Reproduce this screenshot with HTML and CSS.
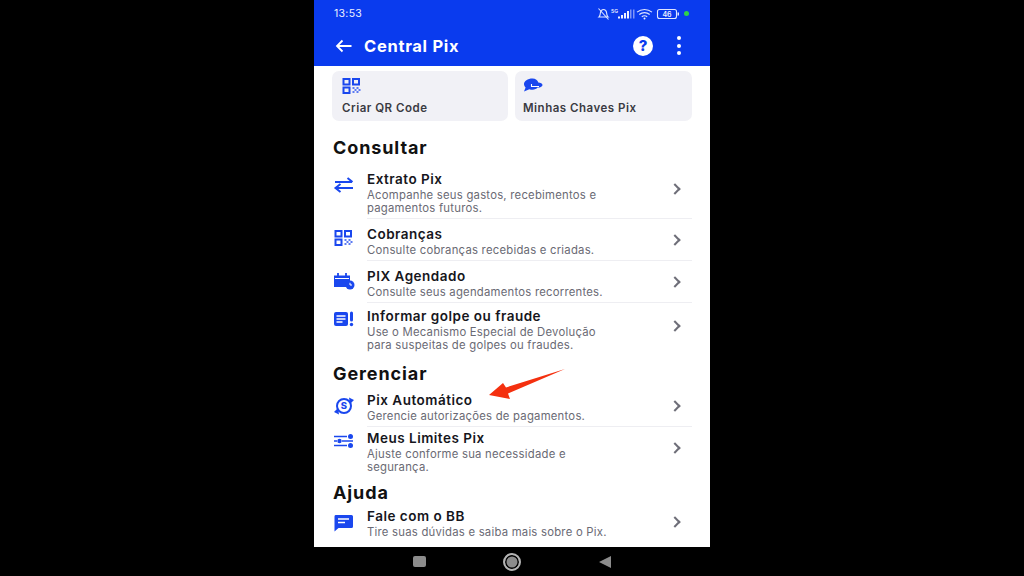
FILE: index.html
```html
<!DOCTYPE html>
<html lang="pt-BR">
<head>
    <meta charset="UTF-8">
    <title>Central Pix</title>
    <link rel="stylesheet" href="styles.css">
</head>
<body>
<div class="phone">
    <header class="top">
        <div class="status">
            <span class="clock">13:53</span>
            <svg class="status-icons" width="84" height="14" viewBox="0 0 84 14">
                <g fill="none" stroke="#dfe5ff" stroke-width="1.100">
                    <path d="M2 10c1.200-1 1.200-2.500 1.400-4.300C3.700 3.500 4.800 2.500 6.500 2.500s2.800 1 3.100 3.200c.2 1.800.2 3.300 1.400 4.300z"/>
                    <path d="M1.500 1.500l10 11"/>
                    <path d="M40 5.200c4.300-3.600 10.700-3.600 15 0M42.300 7.500c3-2.500 7.400-2.500 10.400 0M44.800 9.800c1.500-1.200 3.900-1.200 5.400 0"/>
                    <rect x="60.500" y="2.500" width="19" height="9" rx="2"/>
                </g>
                <text class="tiny" x="14" y="6">5G</text>
                <g fill="#f0f3ff">
                    <rect x="21" y="9.500" width="2" height="2"/>
                    <rect x="24" y="8" width="2" height="3.500"/>
                    <rect x="27" y="6" width="2" height="5.500"/>
                    <rect x="30" y="4" width="2" height="7.500"/>
                </g>
                <g fill="#7f94f5">
                    <rect x="33" y="2.500" width="1.500" height="9"/>
                    <rect x="36" y="2.500" width="1.500" height="9"/>
                </g>
                <circle cx="47.500" cy="11.500" r="1" fill="#f0f3ff"/>
                <rect x="80.500" y="5.500" width="1.500" height="3" fill="#dfe5ff"/>
                <text class="tiny-batt" x="70" y="10" text-anchor="middle">46</text>
            </svg>
            <span class="led"></span>
        </div>
        <div class="bar">
            <svg class="back" width="18" height="14" viewBox="0 0 18 14">
                <path d="M16.500 7H2M7.500 1.500L2 7l5.500 5.500" fill="none" stroke="#fff" stroke-width="1.800"/>
            </svg>
            <h1>Central Pix</h1>
            <span class="help">?</span>
            <span class="dots"><i></i><i></i><i></i></span>
        </div>
    </header>

    <main class="content">
        <div class="cards">
            <div class="card">
                <svg class="icon" width="20" height="16" viewBox="0 0 20 16">
                    <use href="#qr"/>
                </svg>
                <span>Criar QR Code</span>
            </div>
            <div class="card card-keys">
                <svg class="icon" width="20" height="16" viewBox="0 0 20 16">
                    <path d="M9.500 .5c3 0 5.300 1.800 5.800 4 2.200 0 4.200 1.100 4.200 2.500 0 1.500-2 2.600-4.300 2.600h-.6c-1 1.300-2.900 2.200-5.100 2.200-1.100 0-2.200-.2-3.100-.6L1 13.500l1.600-3.900C1.600 8.500 1 7.300 1 6 1 3 4.700 .5 9.500 .5z" fill="#1a47ee"/>
                    <path d="M8.500 6v2.500H16" fill="none" stroke="#fff" stroke-width="1.100"/>
                </svg>
                <span>Minhas Chaves Pix</span>
            </div>
        </div>

        <h2 class="first">Consultar</h2>
        <div class="row r55">
            <svg class="row-icon top-13" width="22" height="16" viewBox="0 0 22 16">
                <path d="M2 5h17M14.500 1l5 4M20 11H3M7.500 7l-5 4 5 4" fill="none" stroke="#1a47ee" stroke-width="2"/>
            </svg>
            <div class="row-main">
                <div class="text">
                    <b>Extrato Pix</b>
                    <p>Acompanhe seus gastos, recebimentos e<br>pagamentos futuros.</p>
                </div>
                <span class="chev"></span>
            </div>
        </div>
        <div class="row r42">
            <svg class="row-icon" width="22" height="16" viewBox="0 0 20 16">
                <use href="#qr"/>
            </svg>
            <div class="row-main">
                <div class="text">
                    <b>Cobranças</b>
                    <p>Consulte cobranças recebidas e criadas.</p>
                </div>
                <span class="chev"></span>
            </div>
        </div>
        <div class="row r42">
            <svg class="row-icon" width="22" height="18" viewBox="0 0 22 18">
                <path d="M1 3.500h16V9a5 5 0 0 0-3.500 6H1z" fill="#1a47ee"/>
                <path d="M5 1v4M13 1v4" stroke="#1a47ee" stroke-width="1.800"/>
                <path d="M2 6.500h14" stroke="#fff" stroke-width="1"/>
                <circle cx="17" cy="13" r="4.500" fill="#1a47ee"/>
                <path d="M17 10.800V13h2" fill="none" stroke="#fff" stroke-width="1"/>
            </svg>
            <div class="row-main">
                <div class="text">
                    <b>PIX Agendado</b>
                    <p>Consulte seus agendamentos recorrentes.</p>
                </div>
                <span class="chev"></span>
            </div>
        </div>
        <div class="row r52">
            <svg class="row-icon top-8" width="22" height="16" viewBox="0 0 22 16">
                <rect x="1" y="1" width="14" height="14" rx="2" fill="#1a47ee"/>
                <path d="M3.500 5h9M3.500 8h9M3.500 11h6" stroke="#fff" stroke-width="1.300"/>
                <path d="M18.500 2v7" stroke="#1a47ee" stroke-width="3" stroke-linecap="round"/>
                <circle cx="18.500" cy="13.500" r="1.700" fill="#1a47ee"/>
            </svg>
            <div class="row-main plain">
                <div class="text">
                    <b>Informar golpe ou fraude</b>
                    <p>Use o Mecanismo Especial de Devolução<br>para suspeitas de golpes ou fraudes.</p>
                </div>
                <span class="chev"></span>
            </div>
        </div>

        <h2 class="manage">Gerenciar</h2>
        <div class="row r39">
            <svg class="row-icon top-9" width="22" height="18" viewBox="0 0 22 18">
                <circle cx="11" cy="9" r="7" fill="none" stroke="#1a47ee" stroke-width="2"/>
                <path d="M16 .5l1 6.500 4-4zM6 17.500L5 11l-4 4z" fill="#1a47ee"/>
                <text class="coin" x="11" y="12.300" text-anchor="middle">S</text>
            </svg>
            <div class="row-main">
                <div class="text">
                    <b>Pix Automático</b>
                    <p>Gerencie autorizações de pagamentos.</p>
                </div>
                <span class="chev"></span>
            </div>
        </div>
        <div class="row r50">
            <svg class="row-icon top-7" width="22" height="14" viewBox="0 0 22 14">
                <path d="M1 2.500h13M1 7h3M9 7h11M1 11.500h13" stroke="#1a47ee" stroke-width="1.600"/>
                <circle cx="6.500" cy="7" r="2.200" fill="#1a47ee"/>
                <circle cx="17.500" cy="2.500" r="2.500" fill="#1a47ee"/>
                <circle cx="17.500" cy="11.500" r="2.500" fill="#1a47ee"/>
            </svg>
            <div class="row-main plain">
                <div class="text">
                    <b>Meus Limites Pix</b>
                    <p>Ajuste conforme sua necessidade e<br>segurança.</p>
                </div>
                <span class="chev"></span>
            </div>
        </div>

        <h2 class="support">Ajuda</h2>
        <div class="row r38">
            <svg class="row-icon top-10" width="22" height="18" viewBox="0 0 22 18">
                <path d="M2.500 1h16A1.500 1.500 0 0 1 20 2.500v10a1.500 1.500 0 0 1-1.500 1.500H5.500l-4 3.500v-15A1.500 1.500 0 0 1 2.500 1z" fill="#1a47ee"/>
                <path d="M5 5h11M5 8.500h7" stroke="#fff" stroke-width="1.300"/>
            </svg>
            <div class="row-main plain">
                <div class="text">
                    <b>Fale com o BB</b>
                    <p>Tire suas dúvidas e saiba mais sobre o Pix.</p>
                </div>
                <span class="chev"></span>
            </div>
        </div>
    </main>

    <nav class="softkeys">
        <span class="key-square"></span>
        <span class="key-circle"></span>
        <span class="key-back"></span>
    </nav>

    <!-- seta vermelha por cima da tela -->
    <svg class="arrow" width="78" height="32" viewBox="0 0 78 32">
        <path d="M76 0L17 18.500 14 14 0 26l21 4-2-5.500z" fill="#f4300f"/>
    </svg>
</div>

<svg class="defs" width="0" height="0">
    <defs>
        <g id="qr">
            <g fill="none" stroke="#1a47ee" stroke-width="2">
                <rect x="1.500" y="1" width="6" height="5.500"/>
                <rect x="11" y="1" width="6" height="5.500"/>
                <rect x="1.500" y="9.500" width="6" height="5.500"/>
            </g>
            <path d="M10.500 9h2v2h-2zM14.500 9h2v2h-2zM12.500 11h2v2h-2zM16.500 11h2v2h-2zM10.500 13h2v2h-2zM14.500 13h2v2h-2z" fill="#5c7bf2"/>
        </g>
    </defs>
</svg>
</body>
</html>
```

FILE: styles.css
```css
html, body {
    height: 100%;
}

body {
    margin: 0;
    background: #000;
    display: flex;
    justify-content: center;
    overflow: hidden;
    font-family: Inter, "Open Sans", sans-serif;
}

.phone {
    position: relative;
    width: 396px;
    height: 576px;
    display: flex;
    flex-direction: column;
    background: #fff;
}

.defs {
    position: absolute;
}

/* topo azul */
.top {
    height: 66px;
    flex: none;
    background: #0a3bee;
    color: #fff;
}

.status {
    height: 27px;
    padding: 0 21px 0 20px;
    display: flex;
    align-items: center;
    font-size: 10.500px;
    letter-spacing: .3px;
    color: #eef1ff;
}

.clock {
    flex: 1;
}

.status-icons {
    margin-right: 3px;
}

.tiny {
    font-size: 5px;
    font-weight: 600;
    letter-spacing: 0;
    fill: #f0f3ff;
}

.tiny-batt {
    font-size: 7px;
    font-weight: 600;
    letter-spacing: 0;
    fill: #f0f3ff;
}

.led {
    width: 5px;
    height: 5px;
    border-radius: 50%;
    background: #2fd24a;
}

.bar {
    height: 37px;
    padding: 0 29px 0 21px;
    display: flex;
    align-items: center;
}

.back {
    margin-right: 11px;
}

h1 {
    flex: 1;
    margin: 0;
    font-size: 16.500px;
    font-weight: 700;
    letter-spacing: .7px;
}

.help {
    width: 20px;
    height: 20px;
    margin-right: 24px;
    border-radius: 50%;
    background: #fff;
    color: #0a3bee;
    font-size: 15px;
    font-weight: 800;
    line-height: 20px;
    text-align: center;
}

.dots {
    display: flex;
    flex-direction: column;
    gap: 3.500px;
}

.dots i {
    width: 4px;
    height: 4px;
    border-radius: 50%;
    background: #fff;
}

/* conteudo */
.content {
    flex: 1;
    padding: 5px 18px 0;
    overflow: hidden;
}

.cards {
    display: flex;
    gap: 7px;
}

.card {
    width: 176px;
    height: 50px;
    padding: 7px 10px 0;
    box-sizing: border-box;
    border-radius: 7px;
    background: #f1f1f6;
    color: #3a3a42;
    font-size: 11.500px;
    font-weight: 600;
    letter-spacing: .5px;
}

.card-keys {
    width: auto;
    flex: 1;
    padding-left: 8px;
}

.icon {
    display: block;
    margin-bottom: 7px;
}

h2 {
    margin: 0 0 0 1px;
    box-sizing: border-box;
    font-size: 18px;
    line-height: 20px;
    font-weight: 700;
    letter-spacing: .9px;
    color: #111;
}

h2.first {
    margin-top: 13px;
    height: 30px;
    padding-top: 4px;
}

h2.manage {
    height: 33px;
    padding-top: 9px;
}

h2.support {
    height: 27px;
    padding-top: 6px;
}

.row {
    display: flex;
    align-items: flex-start;
}

.r38 { height: 38px; }
.r39 { height: 39px; }
.r42 { height: 42px; }
.r50 { height: 50px; }
.r52 { height: 52px; }
.r55 { height: 55px; }

.row-icon {
    flex: none;
    margin: 11px 12px 0 1px;
}

.top-7 { margin-top: 7px; }
.top-8 { margin-top: 8px; }
.top-9 { margin-top: 9px; }
.top-10 { margin-top: 10px; }
.top-13 { margin-top: 13px; }

.coin {
    font-size: 9.500px;
    font-weight: 800;
    fill: #1a47ee;
}

.row-main {
    flex: 1;
    height: 100%;
    box-sizing: border-box;
    padding-top: 2px;
    display: flex;
    align-items: center;
    border-bottom: 1px solid #eeeef2;
}

.row-main.plain {
    border-bottom: 0;
}

.r55 .row-main,
.r42 .row-main {
    padding-top: 4px;
}

.r39 .row-main,
.r50 .row-main,
.r38 .row-main {
    padding-top: 0;
}

.text {
    flex: 1;
}

.text b {
    display: block;
    font-size: 13.500px;
    line-height: 15px;
    font-weight: 600;
    letter-spacing: .5px;
    color: #16161c;
}

.text p {
    margin: 2px 0 -1px;
    font-size: 11.300px;
    line-height: 13px;
    letter-spacing: .24px;
    color: #6a6a74;
}

.chev {
    width: 6px;
    height: 6px;
    margin: 0 13px 4px 0;
    border-top: 2px solid #6e6e78;
    border-right: 2px solid #6e6e78;
    transform: rotate(45deg);
}

.r55 .chev,
.r52 .chev,
.r50 .chev {
    margin-bottom: 8px;
}

.r39 .chev,
.r38 .chev {
    margin-bottom: 2px;
}

/* barra de navegacao */
.softkeys {
    height: 29px;
    flex: none;
    background: #000;
    display: flex;
    align-items: center;
    padding-left: 99px;
    gap: 77px;
}

.key-square {
    width: 13px;
    height: 11px;
    border-radius: 2px;
    background: #8c8c8c;
}

.key-circle {
    width: 18px;
    height: 18px;
    box-sizing: border-box;
    border: 2px solid #b4b4b4;
    border-radius: 50%;
    background: #8c8c8c;
    box-shadow: inset 0 0 0 1.500px #000;
}

.key-back {
    width: 0;
    height: 0;
    margin-left: 1px;
    border-top: 6px solid transparent;
    border-bottom: 6px solid transparent;
    border-right: 12px solid #8c8c8c;
}

.arrow {
    position: absolute;
    left: 175px;
    top: 369px;
}
```
